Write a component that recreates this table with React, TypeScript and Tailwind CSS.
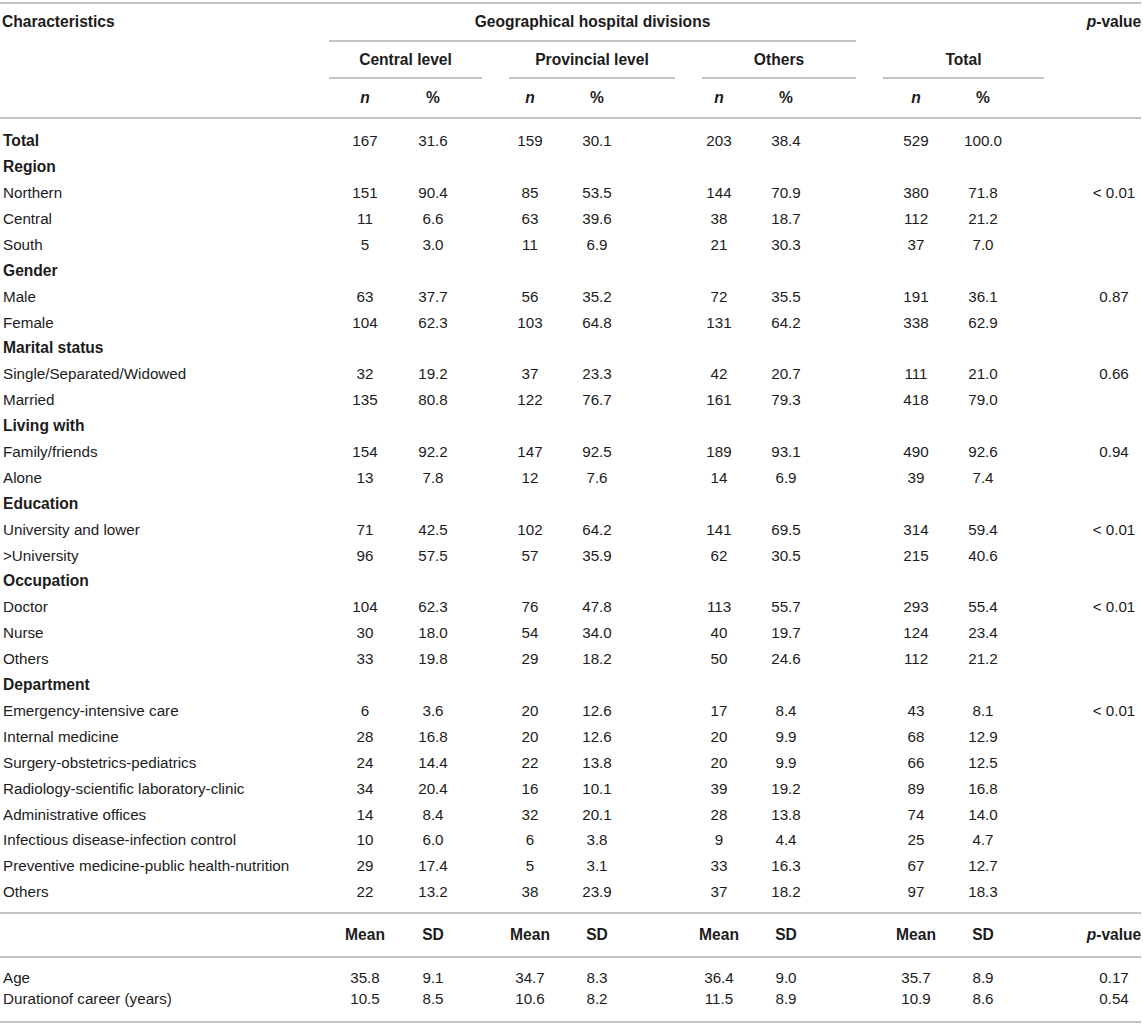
import React from 'react'

type Row = { label: string; head?: boolean; vals?: string[]; p?: string }

// data column boxes, left to right: n/% pairs for each group
const cols = [
  'w-[72px]',
  'w-[64px]',
  'ml-[30px] w-[70px]',
  'w-[64px]',
  'ml-[55px] w-[70px]',
  'w-[64px]',
  'ml-[63px] w-[70px]',
  'w-[64px]',
]

const rows: Row[] = [
  { label: 'Total', head: true, vals: ['167', '31.6', '159', '30.1', '203', '38.4', '529', '100.0'] },
  { label: 'Region', head: true },
  { label: 'Northern', vals: ['151', '90.4', '85', '53.5', '144', '70.9', '380', '71.8'], p: '< 0.01' },
  { label: 'Central', vals: ['11', '6.6', '63', '39.6', '38', '18.7', '112', '21.2'] },
  { label: 'South', vals: ['5', '3.0', '11', '6.9', '21', '30.3', '37', '7.0'] },
  { label: 'Gender', head: true },
  { label: 'Male', vals: ['63', '37.7', '56', '35.2', '72', '35.5', '191', '36.1'], p: '0.87' },
  { label: 'Female', vals: ['104', '62.3', '103', '64.8', '131', '64.2', '338', '62.9'] },
  { label: 'Marital status', head: true },
  { label: 'Single/Separated/Widowed', vals: ['32', '19.2', '37', '23.3', '42', '20.7', '111', '21.0'], p: '0.66' },
  { label: 'Married', vals: ['135', '80.8', '122', '76.7', '161', '79.3', '418', '79.0'] },
  { label: 'Living with', head: true },
  { label: 'Family/friends', vals: ['154', '92.2', '147', '92.5', '189', '93.1', '490', '92.6'], p: '0.94' },
  { label: 'Alone', vals: ['13', '7.8', '12', '7.6', '14', '6.9', '39', '7.4'] },
  { label: 'Education', head: true },
  { label: 'University and lower', vals: ['71', '42.5', '102', '64.2', '141', '69.5', '314', '59.4'], p: '< 0.01' },
  { label: '>University', vals: ['96', '57.5', '57', '35.9', '62', '30.5', '215', '40.6'] },
  { label: 'Occupation', head: true },
  { label: 'Doctor', vals: ['104', '62.3', '76', '47.8', '113', '55.7', '293', '55.4'], p: '< 0.01' },
  { label: 'Nurse', vals: ['30', '18.0', '54', '34.0', '40', '19.7', '124', '23.4'] },
  { label: 'Others', vals: ['33', '19.8', '29', '18.2', '50', '24.6', '112', '21.2'] },
  { label: 'Department', head: true },
  { label: 'Emergency-intensive care', vals: ['6', '3.6', '20', '12.6', '17', '8.4', '43', '8.1'], p: '< 0.01' },
  { label: 'Internal medicine', vals: ['28', '16.8', '20', '12.6', '20', '9.9', '68', '12.9'] },
  { label: 'Surgery-obstetrics-pediatrics', vals: ['24', '14.4', '22', '13.8', '20', '9.9', '66', '12.5'] },
  { label: 'Radiology-scientific laboratory-clinic', vals: ['34', '20.4', '16', '10.1', '39', '19.2', '89', '16.8'] },
  { label: 'Administrative offices', vals: ['14', '8.4', '32', '20.1', '28', '13.8', '74', '14.0'] },
  { label: 'Infectious disease-infection control', vals: ['10', '6.0', '6', '3.8', '9', '4.4', '25', '4.7'] },
  { label: 'Preventive medicine-public health-nutrition', vals: ['29', '17.4', '5', '3.1', '33', '16.3', '67', '12.7'] },
  { label: 'Others', vals: ['22', '13.2', '38', '23.9', '37', '18.2', '97', '18.3'] },
]

const stats = [
  { label: 'Age', vals: ['35.8', '9.1', '34.7', '8.3', '36.4', '9.0', '35.7', '8.9'], p: '0.17' },
  { label: 'Durationof career (years)', vals: ['10.5', '8.5', '10.6', '8.2', '11.5', '8.9', '10.9', '8.6'], p: '0.54' },
]

function Rule() {
  return <div className="h-[2px] w-[1141px] bg-[#c4c4c4]" />
}

function PValue() {
  return (
    <span className="font-bold text-[15.6px]">
      <i>p</i>-value
    </span>
  )
}

function Cells({ vals, p, bold }: { vals: React.ReactNode[]; p?: React.ReactNode; bold?: boolean }) {
  return (
    <>
      {vals.map((v, i) => (
        <div key={i} className={`${cols[i]} text-center ${bold ? 'font-bold text-[15.6px]' : ''}`}>
          {v}
        </div>
      ))}
      <div className="ml-[70px] w-[58px] text-center whitespace-nowrap">{p}</div>
    </>
  )
}

export default function App() {
  const nPct = ['n', '%', 'n', '%', 'n', '%', 'n', '%'].map((t, i) =>
    t === 'n' ? <i key={i}>n</i> : t
  )

  return (
    <div className="w-[1143px] bg-white pt-[2px] font-['Liberation_Sans',Arial,sans-serif] text-[15.2px] leading-none text-[#1c1c1c]">
      <Rule />

      {/* header */}
      <div className="flex h-[36px] items-center text-[15.6px]">
        <div className="w-[329px] pl-[2px] font-bold">Characteristics</div>
        <div className="w-[527px] text-center font-bold">Geographical hospital divisions</div>
        <div className="ml-[229px] w-[58px] text-center whitespace-nowrap">
          <PValue />
        </div>
      </div>
      <div className="ml-[329px] h-[2px] w-[527px] bg-[#c4c4c4]" />
      <div className="flex h-[35px] items-center text-[15.6px] font-bold">
        <div className="ml-[329px] w-[153px] text-center">Central level</div>
        <div className="ml-[27px] w-[166px] text-center">Provincial level</div>
        <div className="ml-[27px] w-[154px] text-center">Others</div>
        <div className="ml-[27px] w-[161px] text-center">Total</div>
      </div>
      <div className="flex h-[2px]">
        <div className="ml-[329px] w-[153px] bg-[#c4c4c4]" />
        <div className="ml-[27px] w-[166px] bg-[#c4c4c4]" />
        <div className="ml-[27px] w-[154px] bg-[#c4c4c4]" />
        <div className="ml-[27px] w-[161px] bg-[#c4c4c4]" />
      </div>
      <div className="flex h-[38px] items-center">
        <div className="w-[329px]" />
        <Cells vals={nPct} bold />
      </div>
      <Rule />

      {/* body */}
      <div className="pt-[9px] pb-[7px]">
        {rows.map((r, i) => (
          <div key={i} className="flex h-[25.9px] items-center">
            <div className={`w-[329px] pl-[3px] ${r.head ? 'font-bold text-[15.6px] pl-[2px]' : ''}`}>{r.label}</div>
            {r.vals && <Cells vals={r.vals} p={r.p} />}
          </div>
        ))}
      </div>
      <Rule />

      <div className="flex h-[42px] items-center">
        <div className="w-[329px]" />
        <Cells
          vals={['Mean', 'SD', 'Mean', 'SD', 'Mean', 'SD', 'Mean', 'SD']}
          p={<PValue />}
          bold
        />
      </div>
      <Rule />

      <div className="pt-[9px] pb-[12px]">
        {stats.map((r, i) => (
          <div key={i} className="flex h-[21px] items-center">
            <div className="w-[329px] pl-[3px]">{r.label}</div>
            <Cells vals={r.vals} p={r.p} />
          </div>
        ))}
      </div>
      <Rule />
    </div>
  )
}
